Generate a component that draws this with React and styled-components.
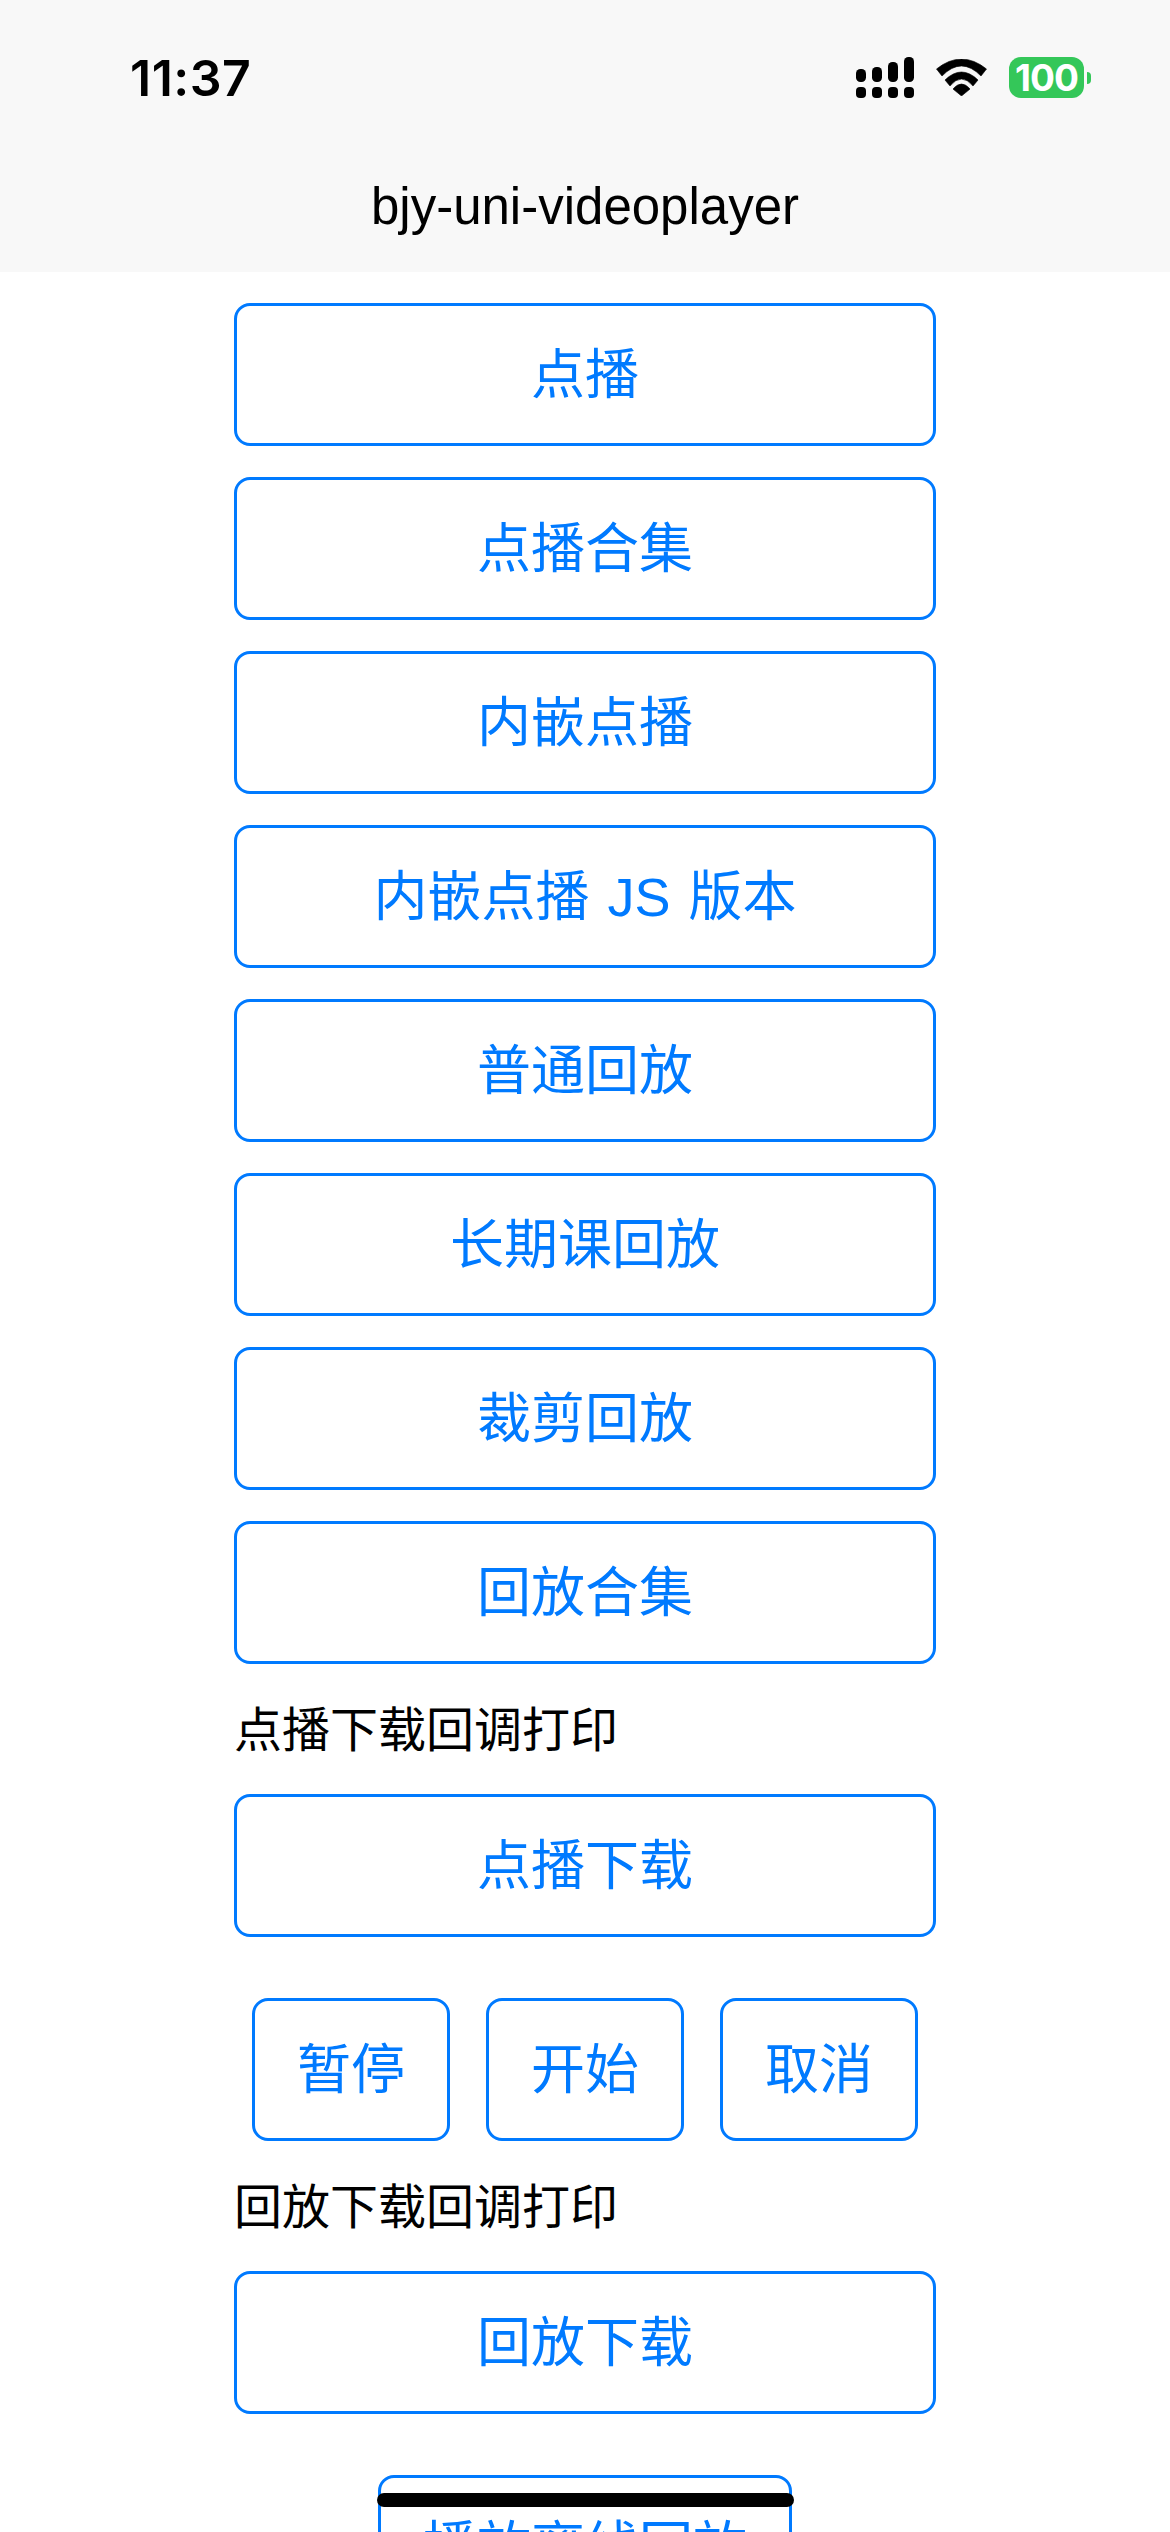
import React from 'react'
import styled, { createGlobalStyle } from 'styled-components'

const GlobalStyle = createGlobalStyle`
    html, body {
        margin: 0;
        padding: 0;
        background: #fff;
    }
    body {
        font-family: "Liberation Sans", "Noto Sans CJK SC", sans-serif;
    }
`

const Page = styled.div`
    position: relative;
    width: 1170px;
    height: 2532px;
    overflow: hidden;
    background: #fff;
`

const Header = styled.header`
    display: flex;
    flex-direction: column;
    height: 272px;
    background: #f8f8f8;
`

const StatusBar = styled.div`
    display: flex;
    align-items: center;
    justify-content: space-between;
    height: 41px;
    margin-top: 57px;
    padding: 0 79px 0 130px;
`

const Time = styled.span`
    font-family: Inter, "Liberation Sans", sans-serif;
    font-size: 50px;
    font-weight: 600;
    letter-spacing: 0.5px;
    color: #000;
`

const StatusIcons = styled.div`
    display: flex;
    align-items: center;
    gap: 22px;
`

const Battery = styled.div`
    display: flex;
    align-items: center;
    gap: 3px;
`

const BatteryBody = styled.span`
    display: flex;
    align-items: center;
    justify-content: center;
    width: 75px;
    height: 41px;
    border-radius: 12px;
    background: #34c759;
    color: #fff;
    font-family: Inter, "Liberation Sans", sans-serif;
    font-size: 37px;
    font-weight: 700;
    letter-spacing: -1px;
`

const BatteryNub = styled.span`
    width: 4px;
    height: 12px;
    border-radius: 0 6px 6px 0;
    background: #34c759;
`

const NavTitle = styled.div`
    margin-top: 73px;
    text-align: center;
    font-size: 51px;
    line-height: 72px;
    color: #000;
`

const Content = styled.main`
    display: flex;
    flex-direction: column;
    gap: 31px;
    width: 702px;
    margin: 31px auto 0;
`

const Button = styled.button`
    display: block;
    box-sizing: border-box;
    flex: none;
    width: ${p => p.$width || '100%'};
    height: 143px;
    padding: 0;
    border: 3px solid #007aff;
    border-radius: 16px;
    background: #fff;
    color: #007aff;
    font-family: "Liberation Sans", "Noto Sans CJK SC", sans-serif;
    font-size: 54px;
    line-height: 139px;
    word-spacing: 3px;
    white-space: pre;
    text-align: center;
`

const CenteredButton = styled(Button)`
    align-self: center;
`

const Label = styled.div`
    height: 68px;
    font-size: 48px;
    line-height: 71px;
    color: #000;
`

const ButtonRow = styled.div`
    display: flex;
    justify-content: center;
    gap: 36px;
`

const Spacer = styled.div`
    height: 30px;
    margin-top: -31px;
`

const HomeIndicator = styled.div`
    position: absolute;
    left: 377px;
    top: 2493px;
    width: 417px;
    height: 14px;
    border-radius: 7px;
    background: #000;
`

const SignalIcon = () => (
    <svg width="58" height="41" viewBox="0 0 58 41" fill="#000">
        <rect x="0" y="12" width="10" height="13" rx="4.5" />
        <rect x="16" y="10" width="10" height="15" rx="4.5" />
        <rect x="32" y="5" width="10" height="20" rx="4.5" />
        <rect x="48" y="0" width="10" height="25" rx="4.5" />
        <rect x="0" y="30" width="10" height="11" rx="4" />
        <rect x="16" y="30" width="10" height="11" rx="4" />
        <rect x="32" y="30" width="10" height="11" rx="4" />
        <rect x="48" y="30" width="10" height="11" rx="4" />
    </svg>
)

const WifiIcon = () => (
    <svg width="51" height="37" viewBox="0 0 51 37" fill="#000" stroke="#000" strokeWidth="0.6" strokeLinejoin="round">
        <path d="M0.5 10Q25.5 -10 50.5 10L45 17Q25.5 -3 6 17Z" />
        <path d="M9 21Q25.5 5 42 21L37 27Q25.5 13 14 27Z" />
        <path d="M17 30Q25.5 20 34 30L25.5 37Z" />
    </svg>
)

const mainButtons = ['点播', '点播合集', '内嵌点播', '内嵌点播 JS 版本', '普通回放', '长期课回放', '裁剪回放', '回放合集']
const controls = ['暂停', '开始', '取消']

const App = () => {
    return (
        <Page>
            <GlobalStyle />
            <Header>
                <StatusBar>
                    <Time>11:37</Time>
                    <StatusIcons>
                        <SignalIcon />
                        <WifiIcon />
                        <Battery>
                            <BatteryBody>100</BatteryBody>
                            <BatteryNub />
                        </Battery>
                    </StatusIcons>
                </StatusBar>
                <NavTitle>bjy-uni-videoplayer</NavTitle>
            </Header>
            <Content>
                {mainButtons.map(text => <Button key={text}>{text}</Button>)}
                <Label>点播下载回调打印</Label>
                <Button>点播下载</Button>
                <Spacer />
                <ButtonRow>
                    {controls.map(text => <Button key={text} $width="198px">{text}</Button>)}
                </ButtonRow>
                <Label>回放下载回调打印</Label>
                <Button>回放下载</Button>
                <Spacer />
                <CenteredButton $width="414px">播放离线回放</CenteredButton>
            </Content>
            <HomeIndicator />
        </Page>
    )
}

export default App
